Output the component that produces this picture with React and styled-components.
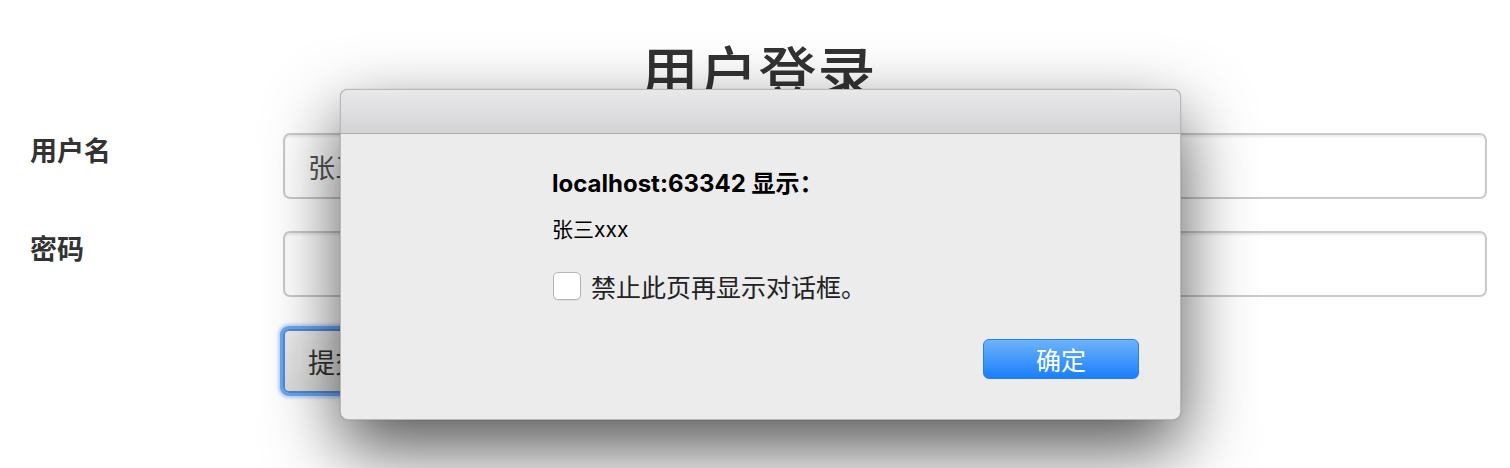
import React from "react";
import styled, { createGlobalStyle } from "styled-components";

const GlobalStyle = createGlobalStyle`
  html, body {
    margin: 0;
    padding: 0;
    background: #fff;
  }
  body {
    font-family: "Noto Sans CJK SC", "Noto Sans", sans-serif;
  }
`;

const Page = styled.div`
  position: relative;
  height: 468px;
  overflow: hidden;
  padding: 0 23px 0 30px;
`;

const Title = styled.h1`
  margin: 39px 0 32px;
  text-align: center;
  font-size: 58px;
  line-height: 62px;
  font-weight: 500;
  letter-spacing: 1px;
  color: #333;
`;

const Form = styled.form`
  display: flex;
  flex-direction: column;
  gap: 32px;
`;

const Row = styled.div`
  display: grid;
  grid-template-columns: 253px 1fr;
  align-items: start;
`;

const Label = styled.label`
  font-size: 27px;
  line-height: 34px;
  font-weight: 700;
  color: #333;
`;

const Input = styled.input`
  box-sizing: border-box;
  height: 66px;
  width: 100%;
  padding: 0 23px;
  border: 2px solid #cacaca;
  border-radius: 7px;
  background: #fff;
  box-shadow: inset 0 2px 2px rgba(0, 0, 0, 0.075);
  font-family: "Noto Sans CJK SC", sans-serif;
  font-size: 27px;
  color: #555;
  outline: none;
`;

const Submit = styled.button`
  grid-column: 2;
  box-sizing: border-box;
  width: 108px;
  height: 64px;
  padding: 0 0 0 23px;
  text-align: left;
  border: 2px solid #4f8ad8;
  border-radius: 6px;
  background: linear-gradient(#ececec, #dcdcdc);
  box-shadow: 0 0 0 3px rgba(100, 160, 240, 0.9), 0 0 3px 5px rgba(120, 175, 245, 0.5);
  font-family: "Noto Sans CJK SC", sans-serif;
  font-size: 27px;
  color: #333;
`;

const Dialog = styled.div`
  position: absolute;
  left: 340px;
  top: 89px;
  width: 841px;
  height: 331px;
  box-sizing: border-box;
  display: flex;
  flex-direction: column;
  border: 1px solid rgba(0, 0, 0, 0.22);
  border-radius: 8px;
  overflow: hidden;
  background: #ececec;
  box-shadow: 0 28px 70px rgba(0, 0, 0, 0.68), 0 0 1px rgba(0, 0, 0, 0.35);
`;

const TitleBar = styled.div`
  height: 43px;
  flex: none;
  background: linear-gradient(#e9e8ea, #d3d2d5);
  border-bottom: 1px solid #acacac;
`;

const Body = styled.div`
  flex: 1;
  display: flex;
  flex-direction: column;
  padding: 35px 41px 40px 211px;
  font-family: Inter, "Noto Sans CJK SC", sans-serif;
`;

const Heading = styled.div`
  font-size: 24px;
  line-height: 30px;
  font-weight: 700;
  color: #000;
`;

const Message = styled.div`
  margin-top: 18px;
  font-size: 21px;
  line-height: 26px;
  color: #000;
`;

const CheckRow = styled.label`
  margin-top: 28px;
  display: flex;
  align-items: center;
  gap: 10px;
  font-family: "Noto Sans CJK SC", sans-serif;
  font-size: 25px;
  line-height: 30px;
  color: #222;
`;

const Box = styled.span`
  width: 26px;
  height: 26px;
  margin-left: 1px;
  flex: none;
  background: #fff;
  border: 1px solid #b4b4b4;
  border-radius: 5px;
  box-shadow: 0 1px 1px rgba(0, 0, 0, 0.06);
`;

const Footer = styled.div`
  margin-top: auto;
  display: flex;
  justify-content: flex-end;
`;

const OkButton = styled.button`
  width: 156px;
  height: 40px;
  box-sizing: border-box;
  border: 1px solid #2a7fef;
  border-radius: 6px;
  background: linear-gradient(#6db3fb, #1a7ffb);
  color: #fff;
  font-family: "Noto Sans CJK SC", sans-serif;
  font-size: 25px;
  line-height: 1;
  padding: 0;
`;

export default function App() {
  return (
    <>
      <GlobalStyle />
      <Page>
        <Title>用户登录</Title>
        <Form onSubmit={(e) => e.preventDefault()}>
          <Row>
            <Label>用户名</Label>
            <Input defaultValue="张三xxx" readOnly />
          </Row>
          <Row>
            <Label>密码</Label>
            <Input type="password" readOnly />
          </Row>
          <Row>
            <Submit type="submit">提交</Submit>
          </Row>
        </Form>
        <Dialog>
          <TitleBar />
          <Body>
            <Heading>localhost:63342 显示：</Heading>
            <Message>张三xxx</Message>
            <CheckRow>
              <Box />
              禁止此页再显示对话框。
            </CheckRow>
            <Footer>
              <OkButton>确定</OkButton>
            </Footer>
          </Body>
        </Dialog>
      </Page>
    </>
  );
}
